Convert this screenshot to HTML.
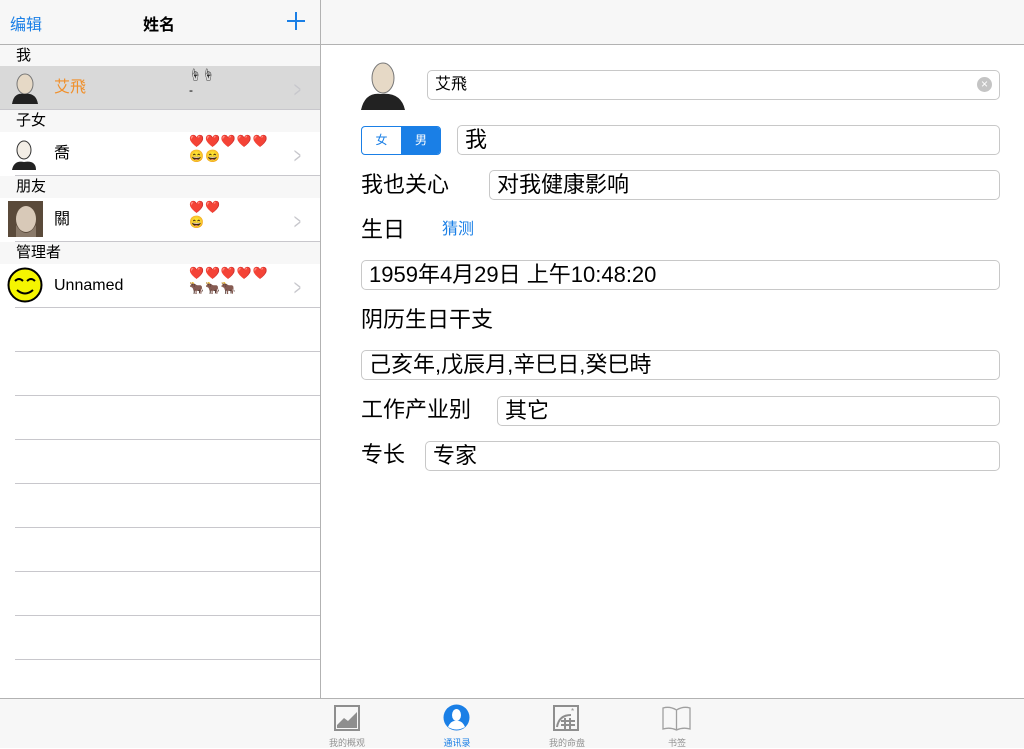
<!DOCTYPE html>
<html><head><meta charset="utf-8">
<style>
*{margin:0;padding:0;box-sizing:border-box}
body{width:1024px;height:748px;overflow:hidden;background:#fff;position:relative;font-family:"Liberation Sans","Noto Sans CJK SC",sans-serif;color:#000}
.a{position:absolute}
.nav{left:0;top:0;width:1024px;height:45px;background:#f7f7f7;border-bottom:1px solid #b2b2b2}
.div{left:320px;top:0;width:1px;height:698px;background:#b2b2b2}
.sh{left:0;width:320px;height:22px;background:#f7f7f7;font-size:15px;padding-left:16px;line-height:22px}
.row{left:0;width:320px;height:44px;background:#fff}
.name{font-size:16px;line-height:44px;left:54px;top:0}
.chev{right:16px;top:11px;color:#c7c7cc;font-size:22px;transform:scaleX(.55)}
.em{left:189px;font-size:12px;line-height:15px;letter-spacing:1px}
.line{left:15px;width:305px;height:1px;background:#c8c7cc}
.fld{border:1px solid #c8c8c8;border-radius:5px;height:30px;font-size:22px;line-height:28px;padding-left:7px;background:#fff}
.lbl{font-size:22px;line-height:30px}
.tab{top:698px;left:0;width:1024px;height:50px;background:#f7f7f7;border-top:1px solid #b2b2b2}
.tl{font-size:9px;color:#929292;text-align:center;width:80px}
</style></head><body>
<div class="a nav"></div>
<div class="a" style="left:10px;top:11px;font-size:16px;color:#1a7fe6">编辑</div>
<div class="a" style="left:143px;top:11px;font-size:16px;font-weight:bold">姓名</div>
<div class="a" style="left:287px;top:12px;width:18px;height:18px">
<div class="a" style="left:0;top:8px;width:18px;height:1.5px;background:#1a7fe6"></div>
<div class="a" style="left:8px;top:0;width:1.5px;height:18px;background:#1a7fe6"></div></div>

<div class="a sh" style="top:45px">我</div>
<div class="a row" style="top:66px;background:#d9d9d9">
 <svg class="a" style="left:10px;top:6px" width="28" height="32"><ellipse cx="15" cy="12" rx="8" ry="10" fill="#e6d9c6" stroke="#777"/><path d="M2 32 Q4 20 14 22 Q26 20 28 32Z" fill="#222"/></svg>
 <div class="a name" style="color:#f0902c">艾飛</div>
 <div class="a em" style="top:2px">☝☝<br>-</div>
 <div class="a chev">&gt;</div></div>
<div class="a sh" style="top:110px">子女</div>
<div class="a row" style="top:132px">
 <svg class="a" style="left:10px;top:6px" width="28" height="32"><ellipse cx="14" cy="12" rx="7" ry="9" fill="#f3eee6" stroke="#333"/><path d="M2 32 Q4 22 14 24 Q26 22 26 32Z" fill="#222"/></svg>
 <div class="a name">喬</div>
 <div class="a em" style="top:2px">❤️❤️❤️❤️❤️<br>😄😄</div>
 <div class="a chev">&gt;</div></div>
<div class="a sh" style="top:176px">朋友</div>
<div class="a row" style="top:198px">
 <svg class="a" style="left:8px;top:3px" width="35" height="36"><rect width="35" height="36" fill="#5a4a3a"/><ellipse cx="18" cy="18" rx="10" ry="13" fill="#d8c9b8"/><path d="M8 24 Q18 40 28 24 L28 36 L8 36Z" fill="#8a7a6a"/></svg>
 <div class="a name">關</div>
 <div class="a em" style="top:2px">❤️❤️<br>😄</div>
 <div class="a chev">&gt;</div></div>
<div class="a sh" style="top:242px">管理者</div>
<div class="a row" style="top:264px">
 <svg class="a" style="left:7px;top:3px" width="36" height="36"><circle cx="18" cy="18" r="16.5" fill="#f5f500" stroke="#000" stroke-width="2"/><path d="M8 14 q4 -4 8 0 M20 14 q4 -4 8 0 M10 23 q8 7 16 0" fill="none" stroke="#000" stroke-width="2"/></svg>
 <div class="a name">Unnamed</div>
 <div class="a em" style="top:2px">❤️❤️❤️❤️❤️<br>🐂🐂🐂</div>
 <div class="a chev">&gt;</div></div>
<div class="a" style="left:0;top:109px;width:320px;height:1px;background:#c8c7cc"></div>
<div class="a line" style="top:175px"></div>
<div class="a line" style="top:241px"></div>
<div class="a line" style="top:307px"></div>
<div class="a line" style="top:351px"></div>
<div class="a line" style="top:395px"></div>
<div class="a line" style="top:439px"></div>
<div class="a line" style="top:483px"></div>
<div class="a line" style="top:527px"></div>
<div class="a line" style="top:571px"></div>
<div class="a line" style="top:615px"></div>
<div class="a line" style="top:659px"></div>
<div class="a div"></div>

<svg class="a" style="left:359px;top:58px" width="48" height="52"><ellipse cx="24" cy="20" rx="11" ry="15" fill="#e6d9c6" stroke="#777"/><path d="M2 52 Q6 34 22 36 Q42 34 46 52Z" fill="#222"/></svg>
<div class="a fld" style="left:427px;top:70px;width:573px;font-size:16px">艾飛</div>
<div class="a" style="left:977px;top:77px;width:15px;height:15px;border-radius:50%;background:#c4c4c4;color:#fff;font-size:12px;line-height:15px;text-align:center">×</div>
<div class="a" style="left:361px;top:126px;width:80px;height:29px;border:1px solid #1a7fe6;border-radius:4px;overflow:hidden;font-size:12px;line-height:27px">
 <div class="a" style="left:0;top:0;width:39px;height:27px;text-align:center;color:#1a7fe6">女</div>
 <div class="a" style="left:39px;top:0;width:40px;height:27px;text-align:center;background:#1a7fe6;color:#fff">男</div></div>
<div class="a fld" style="left:457px;top:125px;width:543px">我</div>
<div class="a lbl" style="left:361px;top:170px">我也关心</div>
<div class="a fld" style="left:489px;top:170px;width:511px">对我健康影响</div>
<div class="a lbl" style="left:361px;top:215px">生日</div>
<div class="a" style="left:442px;top:220px;font-size:16px;color:#1a7fe6;line-height:20px">猜测</div>
<div class="a fld" style="left:361px;top:260px;width:639px">1959年4月29日 上午10:48:20</div>
<div class="a lbl" style="left:361px;top:305px">阴历生日干支</div>
<div class="a fld" style="left:361px;top:350px;width:639px">己亥年,戊辰月,辛巳日,癸巳時</div>
<div class="a lbl" style="left:361px;top:395px">工作产业别</div>
<div class="a fld" style="left:497px;top:396px;width:503px">其它</div>
<div class="a lbl" style="left:361px;top:440px">专长</div>
<div class="a fld" style="left:425px;top:441px;width:575px">专家</div>

<div class="a tab"></div>
<svg class="a" style="left:334px;top:705px" width="26" height="26"><rect x="1" y="1" width="24" height="24" fill="none" stroke="#8e8e8e" stroke-width="2"/><path d="M3 20 L10 13 L14 16 L23 7 L23 23 L3 23Z" fill="#8e8e8e"/></svg>
<div class="a tl" style="left:307px;top:736px">我的概观</div>
<svg class="a" style="left:443px;top:704px" width="27" height="27"><circle cx="13.5" cy="13.5" r="13" fill="#1a7fe6"/><ellipse cx="13.5" cy="11" rx="4.5" ry="6" fill="#fff"/><path d="M5 23 Q8 16 13.5 17 Q19 16 22 23 Q13.5 28 5 23Z" fill="#fff"/></svg>
<div class="a tl" style="left:417px;top:736px;color:#1a7fe6">通讯录</div>
<svg class="a" style="left:553px;top:705px" width="26" height="26"><rect x="1" y="1" width="24" height="24" fill="none" stroke="#8e8e8e" stroke-width="2"/><path d="M4 22 Q6 10 18 10 M8 16 H22 M8 20 H22 M12 13 V25 M17 13 V25" fill="none" stroke="#8e8e8e" stroke-width="2"/><text x="18" y="9" font-size="8" fill="#8e8e8e">*</text></svg>
<div class="a tl" style="left:527px;top:736px">我的命盘</div>
<svg class="a" style="left:662px;top:705px" width="29" height="26"><path d="M14.5 5 Q8 1 1 3 V24 Q8 22 14.5 25 Q21 22 28 24 V3 Q21 1 14.5 5 V25" fill="none" stroke="#a0a0a0" stroke-width="1.3"/></svg>
<div class="a tl" style="left:637px;top:736px">书签</div>
</body></html>
